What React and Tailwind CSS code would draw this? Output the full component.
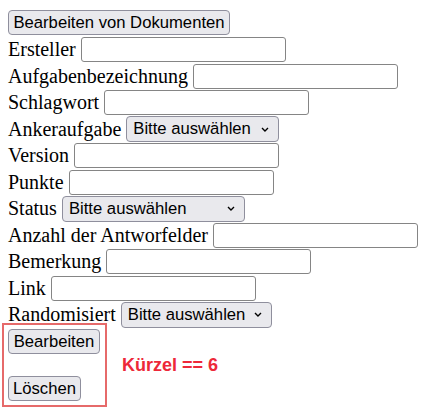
import React from "react";

const labelFont = { fontFamily: '"Liberation Serif", "Times New Roman", serif' };

function TextField({ label }) {
  return (
    <div className="flex items-center gap-[5px] h-[26.5px]">
      <span className="text-[20px] leading-[23px] text-black" style={labelFont}>
        {label}
      </span>
      <input
        type="text"
        className="w-[205px] h-[25px] border border-[#858585] rounded-[3px] bg-white px-[2px] text-[16.67px] font-['Liberation_Sans',Arial,sans-serif] outline-none"
      />
    </div>
  );
}

function SelectField({ label, width }) {
  return (
    <div className="flex items-center gap-[5px] h-[26.5px]">
      <span className="text-[20px] leading-[23px] text-black" style={labelFont}>
        {label}
      </span>
      <div className="relative flex items-center">
        <select
          className={`appearance-none ${width} h-[26px] border border-[#8f8f9d] rounded-[4px] bg-[#e9e9ed] pl-[6px] text-[16.67px] leading-[24px] text-black font-['Liberation_Sans',Arial,sans-serif] outline-none`}
          defaultValue=""
        >
          <option value="">Bitte auswählen</option>
        </select>
        <svg
          className="absolute right-[10px] pointer-events-none"
          width="8"
          height="5"
          viewBox="0 0 8 5"
          fill="none"
        >
          <path d="M1 1 L4 4 L7 1" stroke="#000" strokeWidth="1.4" />
        </svg>
      </div>
    </div>
  );
}

function Btn({ children, width, className = "" }) {
  return (
    <button
      className={`${width} h-[25px] flex items-center justify-center border border-[#8f8f9d] rounded-[4px] bg-[#e9e9ed] text-[16.67px] text-black font-['Liberation_Sans',Arial,sans-serif] ${className}`}
    >
      {children}
    </button>
  );
}

export default function App() {
  return (
    <div className="w-[432px] h-[410px] bg-white pl-2 pt-[10px] overflow-hidden">
      <div className="h-[26.5px]">
        <Btn width="w-[222px]">Bearbeiten von Dokumenten</Btn>
      </div>
      <TextField label="Ersteller" />
      <TextField label="Aufgabenbezeichnung" />
      <TextField label="Schlagwort" />
      <SelectField label="Ankeraufgabe" width="w-[153px]" />
      <TextField label="Version" />
      <TextField label="Punkte" />
      <SelectField label="Status" width="w-[183px]" />
      <TextField label="Anzahl der Antworfelder" />
      <TextField label="Bemerkung" />
      <TextField label="Link" />
      <SelectField label="Randomisiert" width="w-[151px]" />

      <div className="flex items-center -mt-[5px] -ml-[6px]">
        <div className="border-2 border-[#e66a6a] pt-[4px] pl-[4px] pr-[5px] pb-[4px] flex flex-col items-start">
          <Btn width="w-[92px]">Bearbeiten</Btn>
          <Btn width="w-[73px]" className="mt-[22px]">
            Löschen
          </Btn>
        </div>
        <span className="ml-[15px] text-[18px] font-bold text-[#ed2839] font-['Liberation_Sans',Arial,sans-serif]">
          Kürzel == 6
        </span>
      </div>
    </div>
  );
}
